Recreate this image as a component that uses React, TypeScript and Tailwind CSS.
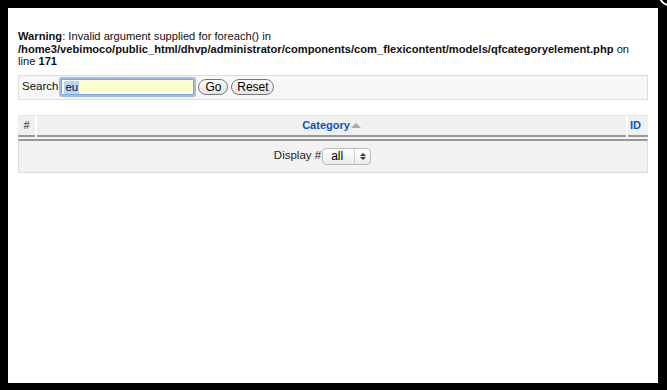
export default function App() {
  return (
    <div className="w-[667px] h-[390px] bg-black p-2 relative overflow-hidden font-['Liberation_Sans',Arial,sans-serif] text-[11px] text-[#333]">
      {/* close button peeking at top-right */}
      <div className="absolute right-[-12px] top-[-14px] w-[20px] h-[20px] rounded-full border-2 border-white bg-black" />
      <div className="w-[650px] h-[375px] bg-white px-[10px] pt-[22px]">
        <div className="leading-[12.5px] text-[11.15px] text-[#111]">
          <b>Warning</b>: Invalid argument supplied for foreach() in{" "}
          <br />
          <b>/home3/vebimoco/public_html/dhvp/administrator/components/com_flexicontent/models/qfcategoryelement.php</b>{" "}
          on
          <br />
          line <b>171</b>
        </div>

        <div className="mt-[7px] h-[25px] border border-[#ddd] bg-[#f7f7f7] flex items-center pl-[3px] text-[#111] text-[11.5px]">
          <span>Search</span>
          <div className="ml-[3px] w-[133px] h-[16px] bg-[#ffffd6] border border-[#7aa7de] ring-2 ring-[#9cc0ec] rounded-[1px] flex items-center pl-[2px]">
            <span className="bg-[#b5d5ff] leading-[13px] px-[1px]">eu</span>
          </div>
          <button className="ml-[4px] h-[16px] w-[30px] rounded-full border border-[#777] bg-gradient-to-b from-white to-[#e6e6e6] text-[12px] leading-[14px] text-black">
            Go
          </button>
          <button className="ml-[3px] h-[16px] w-[43px] rounded-full border border-[#777] bg-gradient-to-b from-white to-[#e6e6e6] text-[12px] leading-[14px] text-black">
            Reset
          </button>
        </div>

        <div className="mt-[15px] w-[630px]">
          <div className="flex h-[22px] bg-[#f0f0f0] border-t border-[#e6e6e6] font-bold">
            <div className="w-[17px] border-b-2 border-[#999] flex items-center justify-center text-[#666]">#</div>
            <div className="w-[2px] bg-white" />
            <div className="flex-1 border-b-2 border-[#999] flex items-center justify-center">
              <span className="text-[#0b55c4]">Category</span>
              <span className="ml-[1px] w-0 h-0 border-l-[5px] border-r-[5px] border-b-[5px] border-l-transparent border-r-transparent border-b-[#aaa]" />
            </div>
            <div className="w-[2px] bg-white" />
            <div className="w-[20px] border-b-2 border-[#999] flex items-center pl-[2px] text-[#0b55c4]">ID</div>
          </div>
          <div className="h-[2px] bg-[#f4f4f4]" />
          <div className="h-[34px] bg-[#f2f2f2] border border-[#ddd] border-t-2 border-t-[#999] flex justify-center items-center gap-[1px] pr-[21px] text-[11.5px] text-[#222]">
            <span>Display #</span>
            <div className="w-[49px] h-[17px] rounded-[4px] border border-[#bbb] bg-gradient-to-b from-white to-[#ececec] flex items-center text-black text-[12px]">
              <span className="pl-[8px] w-[31px] text-left">all</span>
              <div className="h-full w-px bg-[#ccc]" />
              <div className="flex-1 flex flex-col items-center justify-center gap-[1px]">
                <span className="w-0 h-0 border-l-[3px] border-r-[3px] border-b-[3px] border-l-transparent border-r-transparent border-b-[#333]" />
                <span className="w-0 h-0 border-l-[3px] border-r-[3px] border-t-[3px] border-l-transparent border-r-transparent border-t-[#333]" />
              </div>
            </div>
          </div>
        </div>
      </div>
    </div>
  );
}
